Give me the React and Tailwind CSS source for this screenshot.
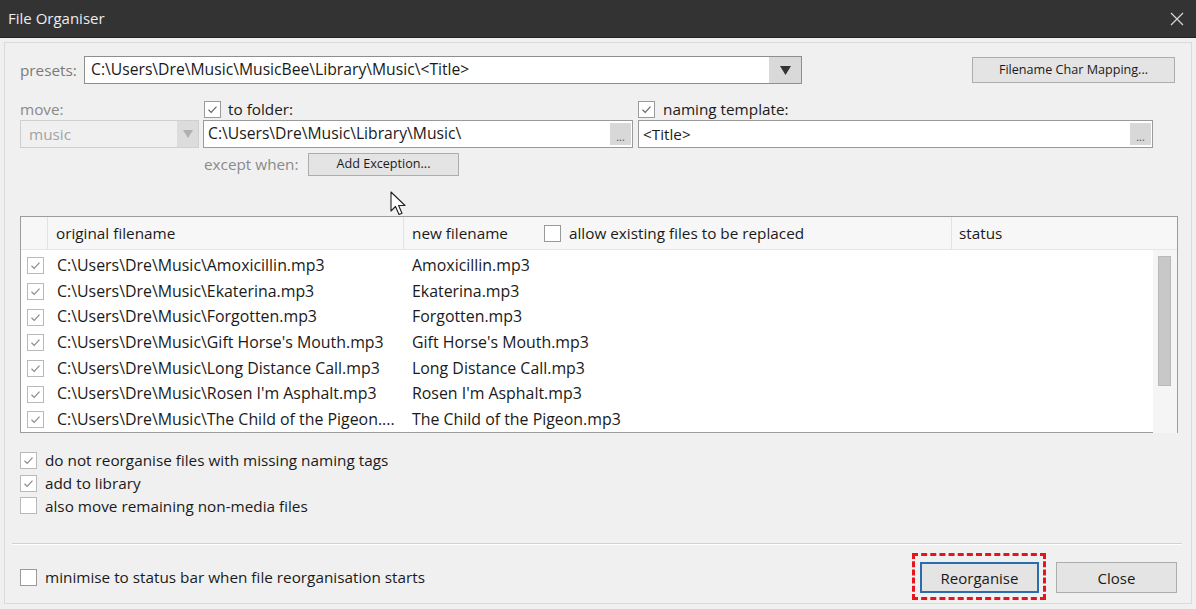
import React from 'react'

const FONT = { fontFamily: '"Open Sans", "Noto Sans", "Liberation Sans", sans-serif' }

const FILES = [
  ['C:\\Users\\Dre\\Music\\Amoxicillin.mp3', 'Amoxicillin.mp3'],
  ['C:\\Users\\Dre\\Music\\Ekaterina.mp3', 'Ekaterina.mp3'],
  ['C:\\Users\\Dre\\Music\\Forgotten.mp3', 'Forgotten.mp3'],
  ["C:\\Users\\Dre\\Music\\Gift Horse's Mouth.mp3", "Gift Horse's Mouth.mp3"],
  ['C:\\Users\\Dre\\Music\\Long Distance Call.mp3', 'Long Distance Call.mp3'],
  ["C:\\Users\\Dre\\Music\\Rosen I'm Asphalt.mp3", "Rosen I'm Asphalt.mp3"],
  ['C:\\Users\\Dre\\Music\\The Child of the Pigeon....', 'The Child of the Pigeon.mp3'],
]

function Check({ checked, light }) {
  return (
    <span
      className={
        'flex h-[17px] w-[17px] shrink-0 items-center justify-center border bg-white ' +
        (light ? 'border-[#b9b9b9]' : 'border-[#9a9a9a]')
      }
    >
      {checked && (
        <svg width="11" height="11" viewBox="0 0 11 11">
          <path d="M1.5 5.8 L4.2 8.4 L9.5 2.6" fill="none" stroke={light ? '#8c8c8c' : '#666'} strokeWidth="1.2" />
        </svg>
      )}
    </span>
  )
}

function Dots() {
  return (
    <span className="flex h-[22px] w-[21px] items-end justify-center bg-[#d8d8d8] pb-[3px] text-[11px] leading-none text-[#555]">
      ...
    </span>
  )
}

export default function App() {
  return (
    <div className="relative flex h-[609px] w-[1196px] flex-col overflow-hidden bg-[#f0f0f0] text-[#1a1a1a]" style={FONT}>
      {/* title bar */}
      <div className="flex h-[38px] shrink-0 items-center justify-between border-b border-[#222] bg-[#333333] pl-[8px] pr-[12px]">
        <span className="text-[15px] text-[#ececec]">File Organiser</span>
        <svg width="14" height="14" viewBox="0 0 14 14">
          <path d="M1 1 L13 13 M13 1 L1 13" stroke="#d8d8d8" strokeWidth="1.2" />
        </svg>
      </div>

      <div className="flex-1 px-[4px] pb-[5px] pt-[4px]">
        <div className="flex h-full flex-col border border-[#dadada] pl-[15px] text-[15.3px]">
          {/* presets */}
          <div className="mt-[13px] flex h-[28px] items-center">
            <span className="w-[64px] text-[#7a7a7a]">presets:</span>
            <div className="flex h-[28px] w-[718px] items-center border border-[#8e8e8e] bg-white pl-[6px]">
              <span className="flex-1 text-[15.7px]">C:\Users\Dre\Music\MusicBee\Library\Music\&lt;Title&gt;</span>
              <span className="flex h-[26px] w-[32px] items-center justify-center bg-[#d9d9d9]">
                <svg width="11" height="9" viewBox="0 0 11 9"><path d="M0 0 H11 L5.5 9 Z" fill="#333" /></svg>
              </span>
            </div>
            <button className="ml-[170px] h-[26px] w-[203px] border border-[#adadad] bg-[#e4e4e4] text-[12.6px]">
              Filename Char Mapping...
            </button>
          </div>

          {/* labels row */}
          <div className="mt-[16px] flex h-[18px] items-center">
            <span className="w-[184px] text-[#8a8a8a]">move:</span>
            <span className="flex w-[434px] items-center gap-[7px]">
              <Check checked />
              to folder:
            </span>
            <span className="flex items-center gap-[8px]">
              <Check checked />
              naming template:
            </span>
          </div>

          {/* inputs row */}
          <div className="mt-[2px] flex h-[28px] items-center">
            <div className="flex h-[28px] w-[179px] items-center border border-[#cfcfcf] bg-[#f0f0f0] pl-[8px] text-[#a3a3a3]">
              <span className="flex-1">music</span>
              <span className="flex h-[26px] w-[21px] items-center justify-center bg-[#dcdcdc]">
                <svg width="10" height="8" viewBox="0 0 10 8"><path d="M0 0 H10 L5 8 Z" fill="#b0b0b0" /></svg>
              </span>
            </div>
            <div className="ml-[4px] flex h-[28px] w-[430px] items-center border border-[#9a9a9a] bg-white pl-[4px] pr-[1px]">
              <span className="flex-1 text-[15.7px]">C:\Users\Dre\Music\Library\Music\</span>
              <Dots />
            </div>
            <div className="ml-[5px] flex h-[28px] w-[515px] items-center border border-[#9a9a9a] bg-white pl-[4px] pr-[1px]">
              <span className="flex-1">&lt;Title&gt;</span>
              <Dots />
            </div>
          </div>

          {/* except when */}
          <div className="ml-[184px] mt-[5px] flex h-[23px] items-center">
            <span className="w-[104px] text-[#8a8a8a]">except when:</span>
            <button className="h-[23px] w-[151px] border border-[#adadad] bg-[#e4e4e4] text-[12.6px]">Add Exception...</button>
          </div>

          {/* file list */}
          <div className="mt-[40px] flex h-[217px] w-[1158px] flex-col border border-[#9c9c9c] bg-white">
            <div className="flex h-[33px] shrink-0 items-center border-b border-[#e6e6e6] bg-[#f7f7f7]">
              <span className="h-full w-[27px] border-r border-[#e3e3e3]" />
              <span className="flex h-full w-[356px] items-center border-r border-[#e3e3e3] pl-[8px]">original filename</span>
              <span className="flex h-full w-[548px] items-center border-r border-[#e3e3e3] pl-[8px]">
                <span className="w-[132px]">new filename</span>
                <Check />
                <span className="ml-[8px]">allow existing files to be replaced</span>
              </span>
              <span className="pl-[7px]">status</span>
            </div>
            <div className="flex flex-1">
              <div className="flex-1 pt-[3px] text-[15.9px]">
                {FILES.map(([orig, next]) => (
                  <div key={orig} className="flex h-[25.7px] items-center">
                    <span className="ml-[6px] w-[30px]">
                      <Check checked light />
                    </span>
                    <span className="w-[355px]">{orig}</span>
                    <span>{next}</span>
                  </div>
                ))}
              </div>
              <div className="w-[24px] bg-[#f5f5f5] pl-[5px] pt-[6px]">
                <div className="h-[130px] w-[13px] border border-[#b8b8b8] bg-[#c8c8c8]" />
              </div>
            </div>
          </div>

          {/* options */}
          <div className="mt-[16px] flex flex-col">
            {[
              ['do not reorganise files with missing naming tags', true],
              ['add to library', true],
              ['also move remaining non-media files', false],
            ].map(([label, on]) => (
              <div key={label} className="flex h-[22.8px] items-center gap-[8px]">
                <Check checked={on} light />
                {label}
              </div>
            ))}
          </div>

          <div className="-ml-[8px] mt-[26px] h-[2px] w-[1170px] border-t border-[#d2d2d2] bg-white" />

          {/* footer */}
          <div className="mt-[17px] flex h-[31px] items-center">
            <span className="flex flex-1 items-center gap-[8px]">
              <Check />
              minimise to status bar when file reorganisation starts
            </span>
            <div className="relative">
              <button className="h-[31px] w-[119px] border-2 border-[#2b6cad] bg-[#e4e4e4] text-[15px]">Reorganise</button>
              <div className="pointer-events-none absolute -bottom-[7px] -left-[8px] -right-[7px] -top-[9px] border-[3px] border-dashed border-[#e8141c]" />
            </div>
            <button className="ml-[17px] mr-[14px] h-[31px] w-[121px] border border-[#adadad] bg-[#e4e4e4] text-[15px]">Close</button>
          </div>
        </div>
      </div>

      {/* mouse cursor */}
      <svg className="absolute left-[390px] top-[191px]" width="18" height="26" viewBox="0 0 18 26">
        <path d="M1 1 V20 L5.5 15.5 L9 23.5 L12 22.2 L8.6 14.5 H15 Z" fill="white" stroke="#222" strokeWidth="1.1" strokeLinejoin="round" />
      </svg>
    </div>
  )
}
